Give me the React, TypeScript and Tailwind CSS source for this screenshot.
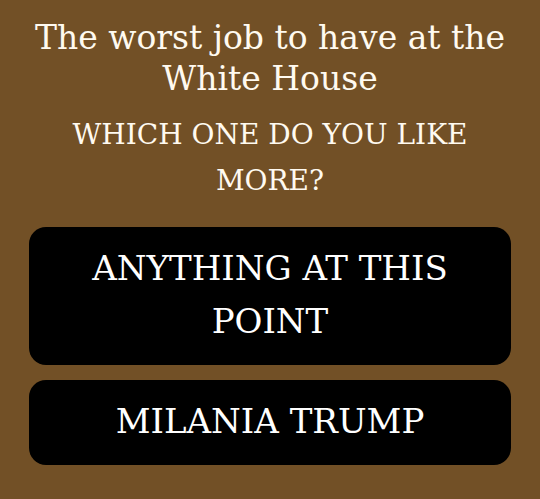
const choices = ["Anything at this point", "Milania Trump"];

export default function App() {
  return (
    <main className="min-h-screen bg-[#725026] px-[29px] pt-[17px] pb-8 text-center font-['DejaVu_Serif','Liberation_Serif',serif] text-[#fffaf0]">
      <h1 className="text-[33px] leading-[41px]">The worst job to have at the White House</h1>
      <p className="mt-[13px] px-8 text-[28px] leading-[46px] uppercase">Which one do you like more?</p>
      <div className="mt-[23px] flex flex-col gap-[15px]">
        {choices.map((choice) => (
          <button
            key={choice}
            type="button"
            className="w-full rounded-[17px] bg-black px-12 pt-[15px] pb-[17px] text-[34px] leading-[53px] text-white uppercase"
          >
            {choice}
          </button>
        ))}
      </div>
    </main>
  );
}
